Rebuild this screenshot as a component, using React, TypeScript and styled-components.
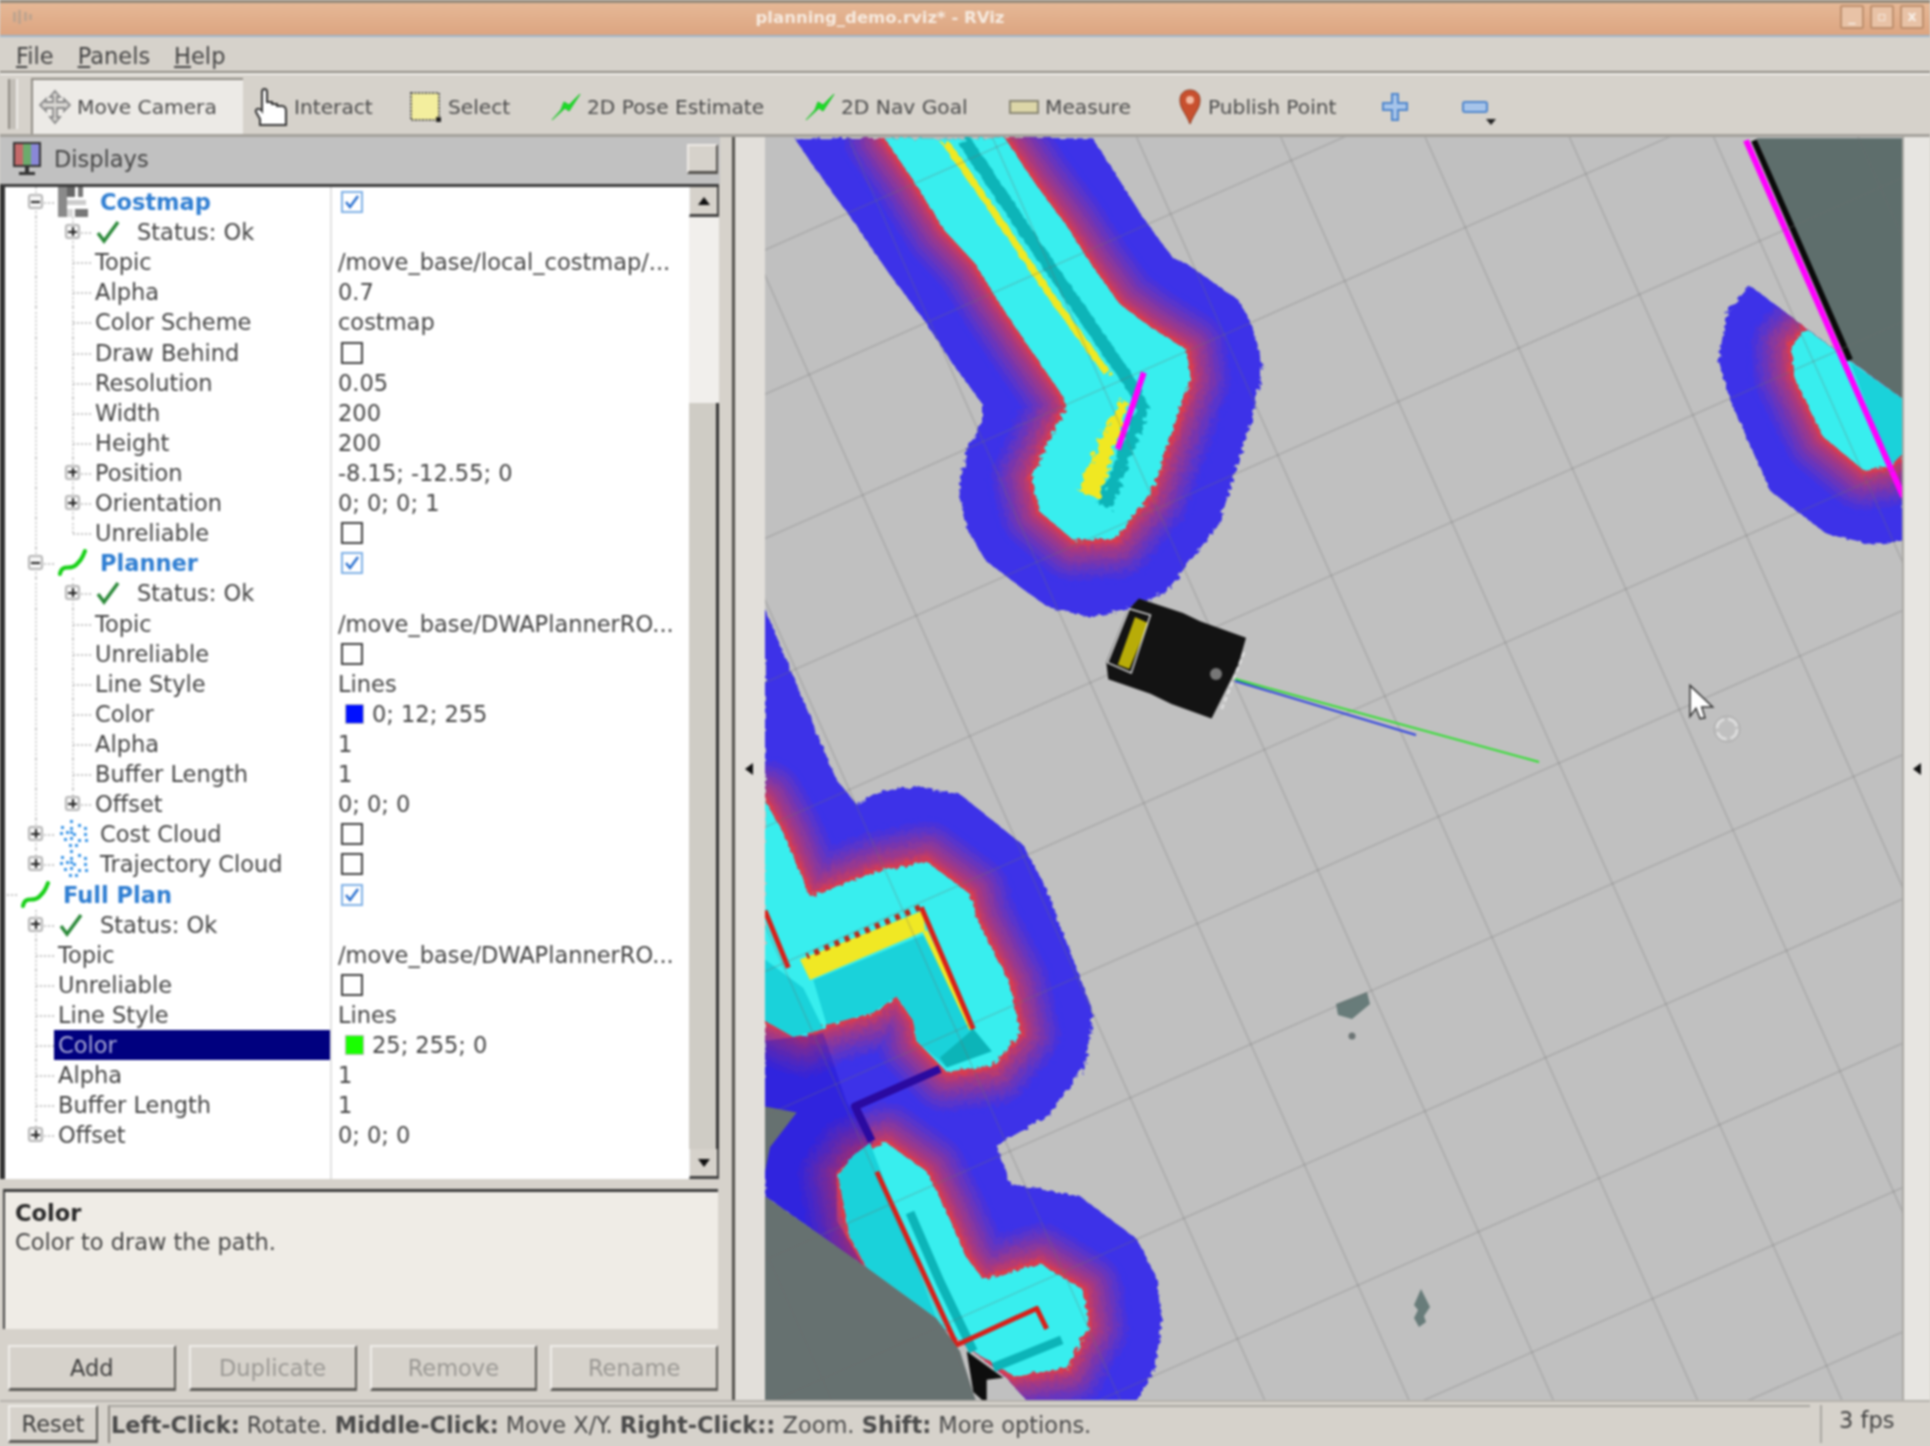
import React from "react";
import styled, { createGlobalStyle } from "styled-components";

const GlobalStyle = createGlobalStyle`
  html, body { margin: 0; padding: 0; background: #d6d2cb; }
  body { font-family: "DejaVu Sans", "Liberation Sans", sans-serif; }
`;

const Window = styled.div`
  width: 1930px;
  height: 1446px;
  display: flex;
  flex-direction: column;
  overflow: hidden;
  background: #d6d2cb;
  color: #3a3a3a;
  font-size: 22.5px;
  filter: blur(0.95px);
`;

const TitleBar = styled.div`
  height: 37px;
  flex: none;
  box-sizing: border-box;
  border-top: 3px solid #93897a;
  border-bottom: 2px solid #9fb4c8;
  background: linear-gradient(#e6b896, #dca581);
  display: flex;
  align-items: center;
  padding: 0 6px 4px 12px;
  color: #f6eadf;
  font-size: 16.5px;
  font-weight: bold;
`;

const TitleText = styled.div`
  flex: 1;
  text-align: center;
  padding-right: 114px;
`;

const WinButtons = styled.div`
  display: flex;
  gap: 6px;
`;

const WinButton = styled.div`
  width: 24px;
  height: 24px;
  box-sizing: border-box;
  border: 2px solid #bd8f6d;
  border-radius: 2px;
  background: #e8c2a6;
  color: #f7efe8;
  font-size: 14px;
  line-height: 18px;
  font-weight: bold;
  text-align: center;
`;

const MenuBar = styled.div`
  height: 36px;
  flex: none;
  box-sizing: border-box;
  display: flex;
  align-items: center;
  gap: 24px;
  padding: 4px 0 0 16px;
  border-bottom: 2px solid #8f8b84;
  color: #444;
`;

const ToolBar = styled.div`
  height: 64px;
  flex: none;
  box-sizing: border-box;
  display: flex;
  align-items: flex-end;
  border-top: 2px solid #f0eeea;
  border-bottom: 3px solid #a5a29c;
  padding-left: 8px;
  font-size: 20.2px;
  color: #4c4c4c;
  position: relative;
`;

const Handle = styled.div`
  width: 6px;
  height: 50px;
  margin: 0 13px 2px 0;
  align-self: center;
  background: #c3bfb8;
  border-left: 2px solid #8f8b84;
  border-right: 2px solid #efedea;
`;

const ToolButton = styled.div<{ $active?: boolean; $w: number }>`
  width: ${(p) => p.$w}px;
  height: 56px;
  flex: none;
  display: flex;
  align-items: center;
  gap: 6px;
  box-sizing: border-box;
  padding-left: ${(p) => (p.$active ? 6 : 0)}px;
  padding-bottom: 1px;
  background: ${(p) => (p.$active ? "#eceae6" : "transparent")};
  border-top: ${(p) => (p.$active ? "2px solid #8f8b84" : "2px solid transparent")};
  border-left: ${(p) => (p.$active ? "2px solid #8f8b84" : "0")};
  margin-right: ${(p) => (p.$active ? 11 : 0)}px;
`;

const DropMark = styled.div`
  position: absolute;
  left: 1486px;
  top: 44px;
  width: 0;
  height: 0;
  border: 5px solid transparent;
  border-top: 6px solid #222;
`;

const Main = styled.div`
  flex: 1;
  min-height: 0;
  display: flex;
`;

const SidePanel = styled.div`
  width: 732px;
  flex: none;
  display: flex;
  flex-direction: column;
  border-right: 3px solid #55534f;
`;

const DockHeader = styled.div`
  height: 47px;
  flex: none;
  display: flex;
  align-items: center;
  gap: 12px;
  background: #c1c1c1;
  padding: 0 2px 3px 12px;
  box-sizing: border-box;
  margin-right: 12px;
  color: #444;
`;

const DockFloat = styled.div`
  margin-left: auto;
  width: 31px;
  height: 30px;
  background: #d6d2cb;
  border-top: 2px solid #eeeae6;
  border-left: 2px solid #eeeae6;
  border-right: 2px solid #55534f;
  border-bottom: 3px solid #55534f;
  box-sizing: border-box;
`;

const TreeBox = styled.div`
  height: 992px;
  flex: none;
  margin-right: 13px;
  display: flex;
  background: #fff;
  border-top: 3px solid #3d3d3d;
  border-left: 5px solid #333;
  padding-left: 2px;
`;

const TreeRows = styled.div`
  flex: 1;
  min-width: 0;
  display: flex;
  flex-direction: column;
`;

const Filler = styled.div`
  flex: 1;
  width: 325px;
  border-right: 2px solid #e2e2e2;
  box-sizing: border-box;
`;

const Row = styled.div`
  height: 30.12px;
  flex: none;
  display: grid;
  grid-template-columns: 325px 1fr;
`;

const LabelCell = styled.div`
  display: flex;
  align-items: center;
  height: 100%;
  box-sizing: border-box;
  border-right: 2px solid #e2e2e2;
  min-width: 0;
`;

const Indent = styled.div`
  width: 10px;
  flex: none;
`;

const Guide = styled.div`
  width: 37px;
  height: 100%;
  flex: none;
  position: relative;
  &::before {
    content: "";
    position: absolute;
    left: 18px;
    top: 0;
    bottom: 0;
    border-left: 2px dotted #cfcfcf;
  }
`;

const Branch = styled(Guide)<{ $last?: boolean }>`
  &::before {
    bottom: ${(p) => (p.$last ? "50%" : "0")};
  }
  &::after {
    content: "";
    position: absolute;
    left: 19px;
    right: 0;
    top: 50%;
    border-top: 2px dotted #c4c4c4;
  }
`;

const RootTick = styled.div`
  width: 10px;
  flex: none;
  border-top: 2px dotted #c4c4c4;
`;

const Expander = styled.div`
  position: absolute;
  left: 11px;
  top: 7px;
  width: 15px;
  height: 15px;
  box-sizing: border-box;
  border: 2px solid #b5b5b5;
  border-radius: 3px;
  background: #f4f4f4;
  z-index: 1;
  &::before {
    content: "";
    position: absolute;
    left: 1px;
    right: 1px;
    top: 4.5px;
    height: 2px;
    background: #222;
  }
`;

const ExpanderPlus = styled(Expander)`
  &::after {
    content: "";
    position: absolute;
    top: 1px;
    bottom: 1px;
    left: 4.5px;
    width: 2px;
    background: #222;
  }
`;

const Label = styled.div<{ $selected?: boolean; $strong?: boolean }>`
  flex: 1;
  height: 100%;
  display: flex;
  align-items: center;
  padding-left: 4px;
  white-space: nowrap;
  background: ${(p) => (p.$selected ? "#00007f" : "transparent")};
  color: ${(p) => (p.$selected ? "#a9a9d6" : p.$strong ? "#2f7ed2" : "#444")};
  font-weight: ${(p) => (p.$strong ? "bold" : "normal")};
`;

const IconBox = styled.div`
  width: 42px;
  flex: none;
  display: flex;
  align-items: center;
`;

const ValueCell = styled.div`
  display: flex;
  align-items: center;
  padding-left: 6px;
  gap: 8px;
  white-space: nowrap;
  color: #444;
`;

const CheckBox = styled.div<{ $on?: boolean }>`
  width: 22px;
  height: 22px;
  margin-left: 3px;
  box-sizing: border-box;
  border: 2px solid ${(p) => (p.$on ? "#7fb0e6" : "#3f3f3f")};
  background: #fff;
  display: flex;
  align-items: center;
  justify-content: center;
`;

const Swatch = styled.div<{ $color: string }>`
  width: 17px;
  height: 18px;
  margin-left: 7px;
  background: ${(p) => p.$color};
  border: 1px solid #bbb;
`;

const ScrollBar = styled.div`
  width: 30px;
  flex: none;
  display: flex;
  flex-direction: column;
  background: #d6d2cb;
`;

const ScrollButton = styled.div`
  height: 30px;
  flex: none;
  box-sizing: border-box;
  background: #d6d2cb;
  border-right: 2px solid #444;
  border-bottom: 3px solid #444;
  border-left: 1px solid #eee;
  display: flex;
  align-items: center;
  justify-content: center;
`;

const ArrowUp = styled.div`
  border: 6px solid transparent;
  border-bottom: 8px solid #111;
  border-top: 0;
`;

const ArrowDown = styled.div`
  border: 6px solid transparent;
  border-top: 8px solid #111;
  border-bottom: 0;
`;

const ScrollTrack = styled.div`
  height: 186px;
  flex: none;
  background: #f1efec;
`;

const ScrollThumb = styled.div`
  flex: 1;
  background: #cfccc5;
  border-right: 3px solid #333;
`;

const Description = styled.div`
  height: 140px;
  flex: none;
  margin: 10px 14px 0 3px;
  padding: 7px 0 0 10px;
  box-sizing: border-box;
  background: #efece6;
  border-top: 3px solid #3d3d3d;
  border-left: 2px solid #444;
  line-height: 29px;
  color: #444;
`;

const DescTitle = styled.div`
  font-weight: bold;
  color: #2a2a2a;
`;

const ButtonRow = styled.div`
  display: flex;
  gap: 13px;
  padding: 16px 14px 0 8px;
`;

const PushButton = styled.div<{ $disabled?: boolean }>`
  flex: 1;
  height: 46px;
  box-sizing: border-box;
  display: flex;
  align-items: center;
  justify-content: center;
  background: #d6d2cb;
  border-top: 2px solid #efedea;
  border-left: 2px solid #efedea;
  border-right: 2px solid #5d5b57;
  border-bottom: 3px solid #5d5b57;
  color: ${(p) => (p.$disabled ? "#9a9894" : "#3e3e3e")};
`;

const Splitter = styled.div`
  flex: 1;
  display: flex;
  align-items: center;
  justify-content: center;
  background: #e2dfda;
  padding-right: 2px;
`;

const ArrowLeft = styled.div`
  border: 6px solid transparent;
  border-right: 8px solid #111;
  border-left: 0;
`;

const RightStrip = styled.div`
  width: 28px;
  flex: none;
  display: flex;
  align-items: center;
  justify-content: center;
  background: #e7e5e1;
  border-left: 2px solid #a9a7a2;
  box-sizing: border-box;
`;

const ViewSvg = styled.svg`
  width: 1137px;
  height: 1263px;
  flex: none;
  display: block;
  background: #c0c0c0;
`;

const StatusBar = styled.div`
  height: 46px;
  flex: none;
  display: flex;
  align-items: stretch;
  padding: 3px 5px 3px 8px;
  gap: 10px;
  box-sizing: border-box;
  border-top: 2px solid #b5b2ac;
`;

const ResetButton = styled(PushButton)`
  flex: none;
  width: 90px;
  height: auto;
`;

const StatusText = styled.div`
  flex: 1;
  display: flex;
  align-items: center;
  padding-left: 1px;
  border-left: 2px solid #8f8b84;
  border-top: 2px solid #a9a7a2;
  white-space: pre;
  color: #4a4a4a;
`;

const FpsBox = styled.div`
  width: 105px;
  flex: none;
  box-sizing: border-box;
  padding: 0 0 8px 17px;
  border-left: 2px solid #a9a7a2;
  display: flex;
  align-items: center;
  color: #444;
`;

// ---- small icons

const MonitorIcon = () => (
  <svg width="30" height="36" viewBox="0 0 30 36">
    <rect x="1" y="1" width="28" height="25" fill="#333" />
    <rect x="3" y="3" width="8" height="21" fill="#c46a6a" />
    <rect x="11" y="3" width="8" height="21" fill="#6cab6c" />
    <rect x="19" y="3" width="8" height="21" fill="#8a88d8" />
    <rect x="13" y="26" width="4" height="5" fill="#333" />
    <rect x="7" y="31" width="16" height="3" fill="#333" />
  </svg>
);

const GridIcon = () => (
  <svg width="30" height="30" viewBox="0 0 30 30">
    <rect x="0" y="0" width="9" height="30" fill="#8a8a8a" />
    <rect x="9" y="0" width="8" height="10" fill="#666" />
    <rect x="20" y="0" width="5" height="10" fill="#777" />
    <rect x="9" y="13" width="19" height="5" fill="#ccc" />
    <rect x="17" y="22" width="13" height="8" fill="#777" />
    <rect x="9" y="22" width="6" height="8" fill="#d8d8d8" />
  </svg>
);

const CheckIcon = () => (
  <svg width="26" height="26" viewBox="0 0 26 26">
    <path d="M3 14 L9 22 L23 3" fill="none" stroke="#2c8a3a" strokeWidth="3.5" />
  </svg>
);

const PathIcon = () => (
  <svg width="30" height="28" viewBox="0 0 30 28">
    <path d="M2 25 C4 14 12 22 18 16 C22 12 24 10 27 2" fill="none" stroke="#16d016" strokeWidth="4" strokeLinecap="round" />
  </svg>
);

const CloudIcon = () => (
  <svg width="30" height="30" viewBox="0 0 30 30" fill="#3a96e8">
    {[[12, 1], [3, 7], [12, 8], [20, 5], [26, 8], [2, 13], [8, 12], [15, 14], [26, 14], [6, 19], [12, 18], [20, 20], [27, 20], [11, 25], [17, 25], [12, 12]].map(([x, y]) => (
      <rect key={`${x}-${y}`} x={x} y={y} width="3" height="3" />
    ))}
  </svg>
);

const TickIcon = () => (
  <svg width="16" height="16" viewBox="0 0 16 16">
    <path d="M2 8 L6 13 L14 2" fill="none" stroke="#2a70d0" strokeWidth="2.5" />
  </svg>
);

const MoveIcon = () => (
  <svg width="32" height="36" viewBox="0 0 32 36" fill="#d8d6d2" stroke="#8a8a8a" strokeWidth="1.8">
    <path d="M16 2 L21 8 H18 V13 H25 V10 L31 16 L25 22 V19 H18 V28 H21 L16 34 L11 28 H14 V19 H7 V22 L1 16 L7 10 V13 H14 V8 H11 Z" />
  </svg>
);

const HandIcon = () => (
  <svg width="34" height="40" viewBox="0 0 34 40">
    <path d="M8 22 V5 C8 1 13 1 13 5 V15 H18 V17 H23 V19 H28 C31 19 32 21 32 24 V38 H6 V32 L2 25 C1 22 5 20 8 24 Z" fill="#fff" stroke="#333" strokeWidth="2" />
  </svg>
);

const SelectIcon = () => (
  <svg width="32" height="30" viewBox="0 0 32 30">
    <rect x="1" y="1" width="28" height="27" fill="#f3ee9e" stroke="#555" strokeWidth="2" strokeDasharray="2 1.5" />
    <rect x="26" y="25" width="5" height="5" fill="#222" />
  </svg>
);

const GoalIcon = () => (
  <svg width="30" height="28" viewBox="0 0 30 28">
    <path d="M1 27 L10 17 L13 9 L18 12 L29 1 L18 18 L14 15 Z" fill="#1ddc28" stroke="#12c41e" strokeWidth="1" />
  </svg>
);

const RulerIcon = () => (
  <svg width="30" height="18" viewBox="0 0 30 18">
    <rect x="1" y="3" width="28" height="12" fill="#dcd6a8" stroke="#8a8874" strokeWidth="2" />
  </svg>
);

const PinIcon = () => (
  <svg width="24" height="36" viewBox="0 0 24 36">
    <path d="M12 35 C8 24 2 20 2 11 C2 4 7 1 12 1 C17 1 22 4 22 11 C22 20 16 24 12 35 Z" fill="#c8502e" stroke="#8c3a20" strokeWidth="1" />
    <circle cx="12" cy="11" r="4" fill="#f2b8a0" />
  </svg>
);

const PlusIcon = () => (
  <svg width="26" height="28" viewBox="0 0 26 28">
    <path d="M10 1 H16 V10 H25 V17 H16 V27 H10 V17 H1 V10 H10 Z" fill="#a6c4ea" stroke="#4f86cc" strokeWidth="2" />
  </svg>
);

const MinusIcon = () => (
  <svg width="26" height="12" viewBox="0 0 26 12">
    <rect x="1" y="1" width="24" height="10" rx="2" fill="#a6c4ea" stroke="#4f86cc" strokeWidth="2" />
  </svg>
);

// ---- tree data

type TreeRow = {
  d: number;
  label: string;
  exp?: "+" | "-";
  icon?: "grid" | "check" | "path" | "cloud";
  strong?: boolean;
  last?: boolean;
  selected?: boolean;
  value?: string;
  check?: boolean;
  swatch?: string;
};

const status = (d: number): TreeRow => ({ d, label: "Status: Ok", exp: "+", icon: "check" });

const rows: TreeRow[] = [
  { d: 1, label: "Costmap", exp: "-", icon: "grid", strong: true, check: true },
  status(2),
  { d: 2, label: "Topic", value: "/move_base/local_costmap/..." },
  { d: 2, label: "Alpha", value: "0.7" },
  { d: 2, label: "Color Scheme", value: "costmap" },
  { d: 2, label: "Draw Behind", check: false },
  { d: 2, label: "Resolution", value: "0.05" },
  { d: 2, label: "Width", value: "200" },
  { d: 2, label: "Height", value: "200" },
  { d: 2, label: "Position", exp: "+", value: "-8.15; -12.55; 0" },
  { d: 2, label: "Orientation", exp: "+", value: "0; 0; 0; 1" },
  { d: 2, label: "Unreliable", check: false, last: true },
  { d: 1, label: "Planner", exp: "-", icon: "path", strong: true, check: true },
  status(2),
  { d: 2, label: "Topic", value: "/move_base/DWAPlannerRO..." },
  { d: 2, label: "Unreliable", check: false },
  { d: 2, label: "Line Style", value: "Lines" },
  { d: 2, label: "Color", value: "0; 12; 255", swatch: "#0010ff" },
  { d: 2, label: "Alpha", value: "1" },
  { d: 2, label: "Buffer Length", value: "1" },
  { d: 2, label: "Offset", exp: "+", value: "0; 0; 0", last: true },
  { d: 1, label: "Cost Cloud", exp: "+", icon: "cloud", check: false },
  { d: 1, label: "Trajectory Cloud", exp: "+", icon: "cloud", check: false, last: true },
  { d: 0, label: "Full Plan", icon: "path", strong: true, check: true },
  status(1),
  { d: 1, label: "Topic", value: "/move_base/DWAPlannerRO..." },
  { d: 1, label: "Unreliable", check: false },
  { d: 1, label: "Line Style", value: "Lines" },
  { d: 1, label: "Color", value: "25; 255; 0", swatch: "#19ff00", selected: true },
  { d: 1, label: "Alpha", value: "1" },
  { d: 1, label: "Buffer Length", value: "1" },
  { d: 1, label: "Offset", exp: "+", value: "0; 0; 0", last: true },
];

const rowIcons = {
  grid: <GridIcon />,
  check: <CheckIcon />,
  path: <PathIcon />,
  cloud: <CloudIcon />,
};

const TreeLine = ({ row }: { row: TreeRow }) => (
  <Row>
    <LabelCell>
      {row.d === 0 ? (
        <RootTick />
      ) : (
        <>
          <Indent />
          {row.d === 2 && <Guide />}
          <Branch $last={row.last}>
            {row.exp === "+" && <ExpanderPlus />}
            {row.exp === "-" && <Expander />}
          </Branch>
        </>
      )}
      <Label $selected={row.selected} $strong={row.strong}>
        {row.icon && <IconBox>{rowIcons[row.icon]}</IconBox>}
        {row.label}
      </Label>
    </LabelCell>
    <ValueCell>
      {row.check !== undefined && <CheckBox $on={row.check}>{row.check && <TickIcon />}</CheckBox>}
      {row.swatch && <Swatch $color={row.swatch} />}
      {row.value}
    </ValueCell>
  </Row>
);

// ---- 3D view drawing. Points were read off crops of the view, hence the per-crop scales.

type Pt = number[];
const at = (ox: number, oy: number, sx: number, sy: number) => (list: Pt[]) =>
  list.map(([x, y]) => `${(ox + x * sx).toFixed(1)},${(oy + y * sy).toFixed(1)}`).join(" ");

const a = at(760, 130, 0.3827, 0.4145);
const b = at(760, 780, 1 / 3, 0.408);
const c = at(1660, 130, 1 / 3, 0.4145);

const BLUE = "#3c32e8";
const CYAN = "#38eeee";
const SHADE = "#1ad2da";
const TEAL = "#0cb4b8";
const YELLOW = "#f0e824";
const RED = "#d8201a";

const mix = (t: number) => {
  const from = [216, 60, 80];
  const to = [60, 50, 232];
  const e = Math.pow(t, 0.75);
  const v = from.map((f, i) => Math.round(f + (to[i] - f) * e));
  return `rgb(${v[0]},${v[1]},${v[2]})`;
};

const FALLOFF = [1, 0.88, 0.76, 0.64, 0.52, 0.42, 0.32, 0.22, 0.13, 0.05, 0];

const CostBlob = ({ id, blue, cores }: { id: string; blue: string; cores: string[] }) => (
  <g filter="url(#jag)">
    <clipPath id={id}>
      <polygon points={blue} />
    </clipPath>
    <polygon points={blue} fill={BLUE} />
    <g clipPath={`url(#${id})`}>
      {FALLOFF.map((t) =>
        cores.map((p, i) => (
          <polygon key={`${t}-${i}`} points={p} fill="none" stroke={mix(t)} strokeWidth={6 + t * 84} strokeLinejoin="round" />
        ))
      )}
    </g>
    {cores.map((p, i) => (
      <polygon key={i} points={p} fill={CYAN} />
    ))}
  </g>
);

const Line = ({ points, color, w, jag, dash }: { points: string; color: string; w: number; jag?: boolean; dash?: string }) => (
  <polyline points={points} fill="none" stroke={color} strokeWidth={w} strokeLinejoin="round" strokeDasharray={dash} filter={jag ? "url(#jagline)" : undefined} />
);

const topBlue = a([[90, 20], [150, 100], [240, 215], [340, 350], [430, 460], [500, 560], [580, 660], [580, 710], [540, 770], [520, 870], [540, 960], [590, 1040], [750, 1150], [860, 1175], [950, 1160], [1060, 1115], [1200, 950], [1290, 680], [1315, 570], [1280, 460], [1250, 410], [1110, 320], [1080, 310], [1000, 210], [870, 20]]);
const topCyan = a([[325, 20], [400, 120], [480, 240], [560, 320], [620, 410], [700, 520], [790, 640], [800, 670], [760, 740], [710, 840], [730, 920], [820, 990], [930, 985], [1020, 880], [1080, 720], [1125, 600], [1115, 530], [1020, 475], [940, 420], [870, 330], [800, 230], [720, 130], [640, 20]]);

const leftBlue = `765,609 ${a([[200, 1568]])} ${b([[235, 5], [290, 60], [350, 30], [460, 15], [600, 35], [790, 160], [860, 270], [1000, 570], [975, 700], [870, 820], [710, 895], [750, 990], [960, 1020], [1130, 1125], [1190, 1220], [1205, 1330], [1185, 1440], [1130, 1530], [810, 1530], [740, 1465], [320, 1195], [15, 1020]])}`;
const leftCyanUpper = b([[15, 50], [70, 130], [150, 285], [350, 225], [500, 200], [630, 280], [650, 340], [750, 500], [780, 620], [700, 700], [560, 715], [470, 640], [460, 590], [410, 530], [340, 570], [200, 600], [130, 630], [15, 590]]);
const leftCyanLower = b([[380, 890], [500, 960], [555, 1050], [620, 1170], [670, 1225], [840, 1185], [970, 1250], [985, 1340], [920, 1440], [760, 1460], [640, 1400], [320, 1195], [270, 1120], [235, 970], [280, 920]]);

const rightBlue = c([[270, 375], [440, 480], [730, 650], [730, 990], [640, 1000], [500, 975], [330, 870], [210, 650], [175, 560], [200, 440]]);
const rightCyan = c([[395, 520], [440, 480], [730, 650], [730, 780], [690, 810], [610, 820], [490, 740], [400, 590]]);

// the floor grid is square; both families hang off one crossing read from the picture
const GRID_STEP = 144.3;
const gridA = Array.from({ length: 13 }, (_, k) => 1260 + GRID_STEP * (k - 8));
const gridB = Array.from({ length: 13 }, (_, k) => 1136.5 + GRID_STEP * (k - 7));

const SceneView = () => (
  <ViewSvg viewBox="765 137 1137 1263">
    <defs>
      <filter id="jag" x="-5%" y="-5%" width="110%" height="110%">
        <feTurbulence type="fractalNoise" baseFrequency="0.22" numOctaves="1" seed="4" />
        <feDisplacementMap in="SourceGraphic" scale="8" />
      </filter>
      <filter id="jagline" x="-20%" y="-20%" width="140%" height="140%">
        <feTurbulence type="fractalNoise" baseFrequency="0.18" numOctaves="1" seed="9" />
        <feDisplacementMap in="SourceGraphic" scale="14" />
      </filter>
    </defs>

    {/* right: occupied area and its blob */}
    <polygon points={c([[290, 20], [730, 20], [730, 650], [570, 560]])} fill="#5e6e6c" />
    <CostBlob id="blob-right" blue={rightBlue} cores={[rightCyan]} />
    <polygon points={c([[570, 560], [730, 650], [730, 780], [690, 810]])} fill={SHADE} />
    <Line points={c([[282, 25], [570, 555]])} color="#0a0a0a" w={6} />
    <Line points={c([[258, 25], [730, 885]])} color="#ff00ff" w={6} />

    {/* top blob */}
    <CostBlob id="blob-top" blue={topBlue} cores={[topCyan]} />
    <Line points={a([[530, 20], [720, 280], [900, 520], [960, 600], [1000, 670], [900, 910]])} color={TEAL} w={13} jag />
    <Line points={a([[485, 30], [620, 210], [760, 400], [870, 540], [910, 590]])} color={YELLOW} w={7} jag />
    <polygon points={a([[945, 650], [965, 660], [925, 770], [890, 890], [830, 870], [870, 790], [890, 740]])} fill={YELLOW} filter="url(#jagline)" />
    <Line points={a([[1003, 585], [935, 770]])} color="#ff00ff" w={6} />

    {/* left blobs */}
    <CostBlob id="blob-left" blue={leftBlue} cores={[leftCyanUpper, leftCyanLower]} />
    <polygon points={b([[15, 640], [190, 620], [260, 790], [340, 890], [230, 960], [230, 1080], [310, 1190], [15, 1020]])} fill="#1408c8" fillOpacity="0.3" />
    <polygon points={b([[160, 490], [490, 380], [640, 610], [695, 665], [560, 705], [470, 640], [460, 590], [410, 530], [340, 570], [200, 600]])} fill={SHADE} />
    <polygon points={b([[15, 440], [130, 510], [190, 610], [100, 630], [15, 590]])} fill={SHADE} />
    <polygon points={b([[235, 970], [280, 920], [330, 890], [530, 1320], [320, 1195], [270, 1120]])} fill={SHADE} />
    <polygon points={b([[640, 610], [695, 665], [560, 705], [540, 680]])} fill={TEAL} />
    <polygon points={b([[120, 440], [490, 320], [495, 370], [150, 490]])} fill={YELLOW} />
    <Line points={b([[480, 312], [140, 432]])} color="#b82c1c" w={6} dash="5 6" />
    <Line points={b([[495, 370], [635, 610]])} color={YELLOW} w={5} />
    <Line points={b([[484, 312], [640, 610]])} color={RED} w={5} />
    <Line points={b([[15, 320], [85, 460]])} color={RED} w={5} />
    <Line points={b([[450, 1060], [540, 1230], [640, 1400]])} color={TEAL} w={9} />
    <Line points={b([[700, 1440], [905, 1372]])} color={TEAL} w={9} />
    <Line points={b([[350, 960], [590, 1385], [830, 1295], [860, 1345]])} color={RED} w={5} />
    <Line points={b([[540, 708], [285, 800], [335, 885]])} color="#2a0aa0" w={8} />
    <polygon points={b([[15, 1020], [320, 1195], [530, 1320], [600, 1400], [650, 1530], [15, 1530]])} fill="#667170" />
    <polygon points={b([[15, 800], [110, 815], [30, 900], [15, 960]])} fill="#667170" />
    <polygon points={b([[620, 1400], [730, 1465], [680, 1470], [680, 1530], [640, 1500]])} fill="#0e0e0e" />

    {/* free-space specks */}
    <polygon points="1336,1004 1367,992 1370,1004 1352,1019 1338,1015" fill="#687c7a" />
    <circle cx="1352" cy="1036" r="3.5" fill="#6c7474" />
    <polygon points="1421,1289 1430,1307 1424,1316 1426,1322 1419,1327 1414,1318 1418,1310 1414,1305" fill="#687c7a" />

    {/* grid */}
    <g stroke="#6e6e6e" strokeOpacity="0.25" strokeWidth="1.7">
      {gridA.map((y) => (
        <line key={y} x1="765" y1={y} x2="1902" y2={y - 505} />
      ))}
      {gridB.map((x) => (
        <line key={x} x1={x} y1="137" x2={x + 561} y2="1400" />
      ))}
    </g>

    {/* robot and its paths */}
    <polygon points={a([[990, 1130], [1105, 1165], [1150, 1185], [1270, 1225], [1250, 1290], [1180, 1420], [1075, 1385], [1020, 1360], [910, 1325], [905, 1285], [960, 1160]])} fill="#131313" />
    <polygon points={a([[980, 1175], [1015, 1190], [965, 1300], [935, 1290]])} fill="#b8ac08" />
    <polygon points={a([[965, 1155], [1020, 1170], [970, 1310], [908, 1285]])} fill="none" stroke="#d8d8d8" strokeWidth="1.5" />
    <Line points={a([[1265, 1260], [1205, 1400]])} color="#e0e0e0" w={2.5} dash="5 3" />
    <circle cx="1216" cy="674" r="6" fill="#777" />
    <line x1="1235" y1="679" x2="1539" y2="762" stroke="#2ee02e" strokeWidth="2" />
    <line x1="1235" y1="681" x2="1416" y2="735" stroke="#2c40e0" strokeWidth="2" />

    {/* cursor */}
    <polygon points={c([[90, 1340], [158, 1392], [125, 1392], [135, 1418], [120, 1420], [108, 1395], [90, 1415]])} fill="#fff" stroke="#333" strokeWidth="1.5" />
    <circle cx="1727" cy="729" r="10" fill="none" stroke="#dcdcdc" strokeWidth="3" strokeDasharray="12 4" />
    <circle cx="1727" cy="729" r="13" fill="none" stroke="#aaa" strokeWidth="1" />
  </ViewSvg>
);

export default function App() {
  return (
    <>
      <GlobalStyle />
      <Window>
        <TitleBar>
          <svg width="22" height="14" viewBox="0 0 22 14" fill="#bfa48e">
            <rect x="1" y="2" width="3" height="10" />
            <rect x="6" y="0" width="3" height="14" />
            <rect x="12" y="2" width="3" height="9" />
            <rect x="17" y="4" width="3" height="6" />
          </svg>
          <TitleText>planning_demo.rviz* - RViz</TitleText>
          <WinButtons>
            <WinButton>_</WinButton>
            <WinButton>▫</WinButton>
            <WinButton>x</WinButton>
          </WinButtons>
        </TitleBar>
        <MenuBar>
          <span><u>F</u>ile</span>
          <span><u>P</u>anels</span>
          <span><u>H</u>elp</span>
        </MenuBar>
        <ToolBar>
          <Handle />
          <ToolButton $active $w={212}><MoveIcon />Move Camera</ToolButton>
          <ToolButton $w={156}><HandIcon />Interact</ToolButton>
          <ToolButton $w={141}><SelectIcon />Select</ToolButton>
          <ToolButton $w={254}><GoalIcon />2D Pose Estimate</ToolButton>
          <ToolButton $w={204}><GoalIcon />2D Nav Goal</ToolButton>
          <ToolButton $w={169}><RulerIcon />Measure</ToolButton>
          <ToolButton $w={204}><PinIcon />Publish Point</ToolButton>
          <ToolButton $w={80}><PlusIcon /></ToolButton>
          <ToolButton $w={40}><MinusIcon /></ToolButton>
          <DropMark />
        </ToolBar>
        <Main>
          <SidePanel>
            <DockHeader>
              <MonitorIcon />
              Displays
              <DockFloat />
            </DockHeader>
            <TreeBox>
              <TreeRows>
                {rows.map((row, i) => (
                  <TreeLine key={i} row={row} />
                ))}
                <Filler />
              </TreeRows>
              <ScrollBar>
                <ScrollButton><ArrowUp /></ScrollButton>
                <ScrollTrack />
                <ScrollThumb />
                <ScrollButton><ArrowDown /></ScrollButton>
              </ScrollBar>
            </TreeBox>
            <Description>
              <DescTitle>Color</DescTitle>
              Color to draw the path.
            </Description>
            <ButtonRow>
              <PushButton>Add</PushButton>
              <PushButton $disabled>Duplicate</PushButton>
              <PushButton $disabled>Remove</PushButton>
              <PushButton $disabled>Rename</PushButton>
            </ButtonRow>
          </SidePanel>
          <Splitter><ArrowLeft /></Splitter>
          <SceneView />
          <RightStrip><ArrowLeft /></RightStrip>
        </Main>
        <StatusBar>
          <ResetButton>Reset</ResetButton>
          <StatusText>
            <span><b>Left-Click:</b> Rotate. <b>Middle-Click:</b> Move X/Y. <b>Right-Click::</b> Zoom. <b>Shift:</b> More options.</span>
          </StatusText>
          <FpsBox>3 fps</FpsBox>
        </StatusBar>
      </Window>
    </>
  );
}
